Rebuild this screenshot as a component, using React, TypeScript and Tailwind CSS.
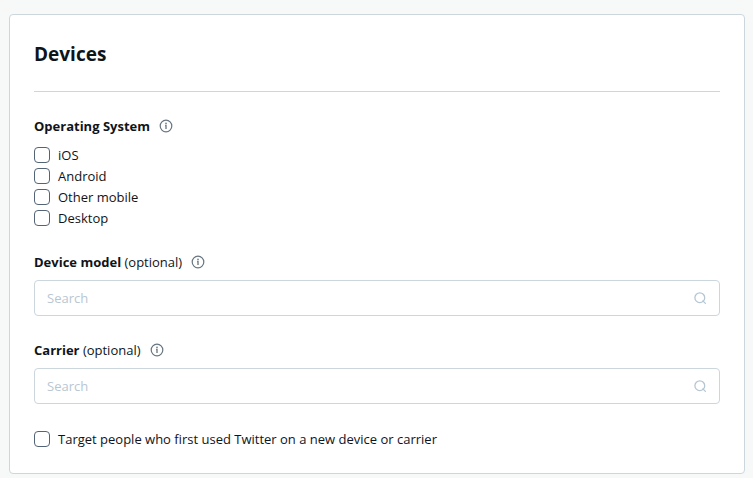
import { useState } from "react";
import type { ReactNode } from "react";

// ============================================
// Types
// ============================================

interface CheckboxRowProps {
  id: string;
  label: string;
  checked: boolean;
  onChange: (id: string) => void;
}

interface SearchFieldProps {
  id: string;
  label: string;
}

const OPERATING_SYSTEMS = [
  { id: "ios", label: "iOS" },
  { id: "android", label: "Android" },
  { id: "other-mobile", label: "Other mobile" },
  { id: "desktop", label: "Desktop" },
];

// ============================================
// Icons
// ============================================

function InfoIcon() {
  return (
    <svg viewBox="0 0 14 14" className="size-3.5" fill="none" aria-hidden="true">
      <circle cx="7" cy="7" r="5.8" stroke="#66757f" strokeWidth="1.2" />
      <circle cx="7" cy="4.4" r="0.8" fill="#66757f" />
      <path d="M6.1 6.5H7V10" stroke="#66757f" strokeWidth="1.3" />
    </svg>
  );
}

function SearchIcon() {
  return (
    <svg
      viewBox="0 0 14 14"
      className="size-3.5 shrink-0"
      fill="none"
      stroke="#b5c6d3"
      strokeWidth="1.3"
      strokeLinecap="round"
      aria-hidden="true"
    >
      <circle cx="6.8" cy="6.7" r="4.9" />
      <path d="M9.9 9.9l2.5 2.5" />
    </svg>
  );
}

// ============================================
// Form parts
// ============================================

function FieldHeading({ name, children }: { name: string; children: ReactNode }) {
  return (
    <div className="flex h-5 items-center gap-[9px]">
      {children}
      <button type="button" aria-label={`About ${name}`}>
        <InfoIcon />
      </button>
    </div>
  );
}

function CheckboxRow({ id, label, checked, onChange }: CheckboxRowProps) {
  return (
    <div className="flex h-5 items-center gap-2">
      <input
        id={id}
        type="checkbox"
        checked={checked}
        onChange={() => onChange(id)}
        className="size-4 shrink-0 appearance-none rounded border border-[#536476] bg-white checked:bg-[#1da1f2]"
      />
      <label htmlFor={id}>{label}</label>
    </div>
  );
}

function SearchField({ id, label }: SearchFieldProps) {
  return (
    <div className="mt-6">
      <FieldHeading name={label}>
        <label htmlFor={id}>
          <span className="font-bold">{label}</span> (optional)
        </label>
      </FieldHeading>
      <div className="mt-2 flex h-9 items-center rounded border border-[#ccd6dd] px-3">
        <input
          id={id}
          type="text"
          placeholder="Search"
          className="min-w-0 flex-1 bg-transparent outline-none placeholder:text-[#b8c7d3]"
        />
        <SearchIcon />
      </div>
    </div>
  );
}

// ============================================
// Main Component
// ============================================

export default function App() {
  const [selected, setSelected] = useState<string[]>([]);

  const toggle = (id: string) => {
    setSelected((prev) =>
      prev.includes(id) ? prev.filter((item) => item !== id) : [...prev, id]
    );
  };

  return (
    <main className="min-h-screen bg-[#f7f9f9] pt-3.5 pr-2 pb-1 pl-[9px] font-['Open_Sans',sans-serif] text-[13px] leading-5 text-[#0f1419]">
      <section className="rounded border border-[#ccd6dd] bg-white p-6">
        <h2 className="border-b border-[#ccd6dd] pb-[22px] text-[19px] leading-[30px] font-bold">
          Devices
        </h2>

        {/* Operating systems */}
        <div className="mt-6" role="group" aria-labelledby="os-heading">
          <FieldHeading name="Operating System">
            <h3 id="os-heading" className="font-bold">
              Operating System
            </h3>
          </FieldHeading>
          <div className="mt-[9px] flex flex-col gap-px">
            {OPERATING_SYSTEMS.map((os) => (
              <CheckboxRow
                key={os.id}
                id={os.id}
                label={os.label}
                checked={selected.includes(os.id)}
                onChange={toggle}
              />
            ))}
          </div>
        </div>

        <SearchField id="device-model" label="Device model" />
        <SearchField id="carrier" label="Carrier" />

        <div className="mt-[25px]">
          <CheckboxRow
            id="new-device"
            label="Target people who first used Twitter on a new device or carrier"
            checked={selected.includes("new-device")}
            onChange={toggle}
          />
        </div>
      </section>
    </main>
  );
}
